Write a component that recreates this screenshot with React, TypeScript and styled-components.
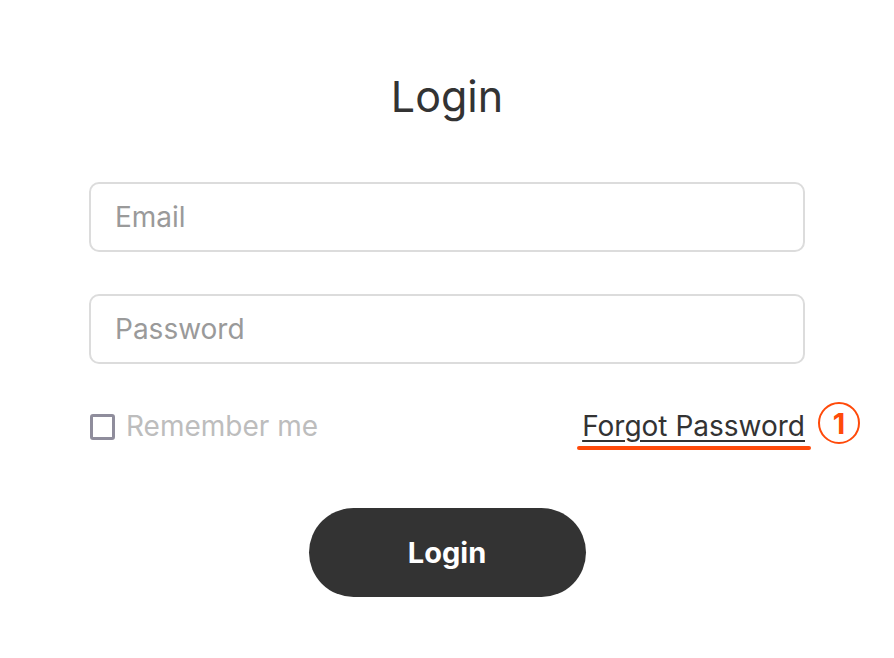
import React from 'react';
import styled, { createGlobalStyle } from 'styled-components';

const GlobalStyle = createGlobalStyle`
  html, body {
    margin: 0;
    padding: 0;
    background: #ffffff;
    font-family: Inter, 'Noto Sans', 'Liberation Sans', sans-serif;
  }
`;

const App: React.FC = () => {
  return (
    <>
      <GlobalStyle />
      <Page>
        <Title>Login</Title>
        <Form>
          <Field placeholder="Email" type="text" />
          <Field placeholder="Password" type="password" />
          <OptionsRow>
            <RememberLabel>
              <CheckBox type="checkbox" />
              Remember me
            </RememberLabel>
            <ForgotWrap>
              <ForgotLink href="#">Forgot Password</ForgotLink>
              <Marker />
              <Badge>1</Badge>
            </ForgotWrap>
          </OptionsRow>
          <SubmitButton type="button">Login</SubmitButton>
        </Form>
      </Page>
    </>
  );
};

const Page = styled.div`
  width: 716px;
  margin: 0 auto;
  padding-top: 71px;
`;

const Title = styled.h1`
  margin: 0;
  height: 50px;
  line-height: 50px;
  text-align: center;
  font-size: 43px;
  font-weight: 400;
  color: #333333;
`;

const Form = styled.form`
  display: flex;
  flex-direction: column;
  margin-top: 61px;
  gap: 42px;
`;

const Field = styled.input`
  box-sizing: border-box;
  width: 100%;
  height: 70px;
  padding: 0 24px;
  border: 2px solid #dcdcdc;
  border-radius: 10px;
  font-family: inherit;
  font-size: 28px;
  color: #333;
  outline: none;
  &::placeholder {
    color: #9a9a9a;
  }
`;

const OptionsRow = styled.div`
  display: flex;
  align-items: center;
  justify-content: space-between;
  height: 40px;
`;

const RememberLabel = styled.label`
  display: flex;
  align-items: center;
  gap: 11px;
  font-size: 28px;
  color: #bdbdbd;
  padding-left: 1px;
`;

const CheckBox = styled.input`
  appearance: none;
  margin: 0;
  box-sizing: border-box;
  width: 25px;
  height: 26px;
  border: 3px solid #8f8d9c;
  border-radius: 3px;
  background: #fff;
  position: relative;
  top: 1px;
`;

const ForgotWrap = styled.div`
  position: relative;
`;

const ForgotLink = styled.a`
  font-size: 28px;
  color: #333333;
  text-decoration: underline;
  text-decoration-thickness: 2px;
  text-underline-offset: 4px;
`;

const Marker = styled.span`
  position: absolute;
  left: -5px;
  right: -6px;
  bottom: -7px;
  height: 4px;
  border-radius: 2px;
  background: #ff4a0a;
`;

const Badge = styled.span`
  position: absolute;
  left: 236px;
  top: -7px;
  box-sizing: border-box;
  width: 42px;
  height: 42px;
  border: 2.5px solid #ff4a0a;
  border-radius: 50%;
  display: flex;
  align-items: center;
  justify-content: center;
  color: #ff4a0a;
  font-size: 29px;
  font-weight: 700;
`;

const SubmitButton = styled.button`
  align-self: center;
  width: 277px;
  height: 89px;
  margin-top: 20px;
  border: 0;
  border-radius: 45px;
  background: #333333;
  color: #ffffff;
  font-family: Inter, 'Noto Sans', sans-serif;
  font-size: 29px;
  font-weight: 700;
`;

export default App;
